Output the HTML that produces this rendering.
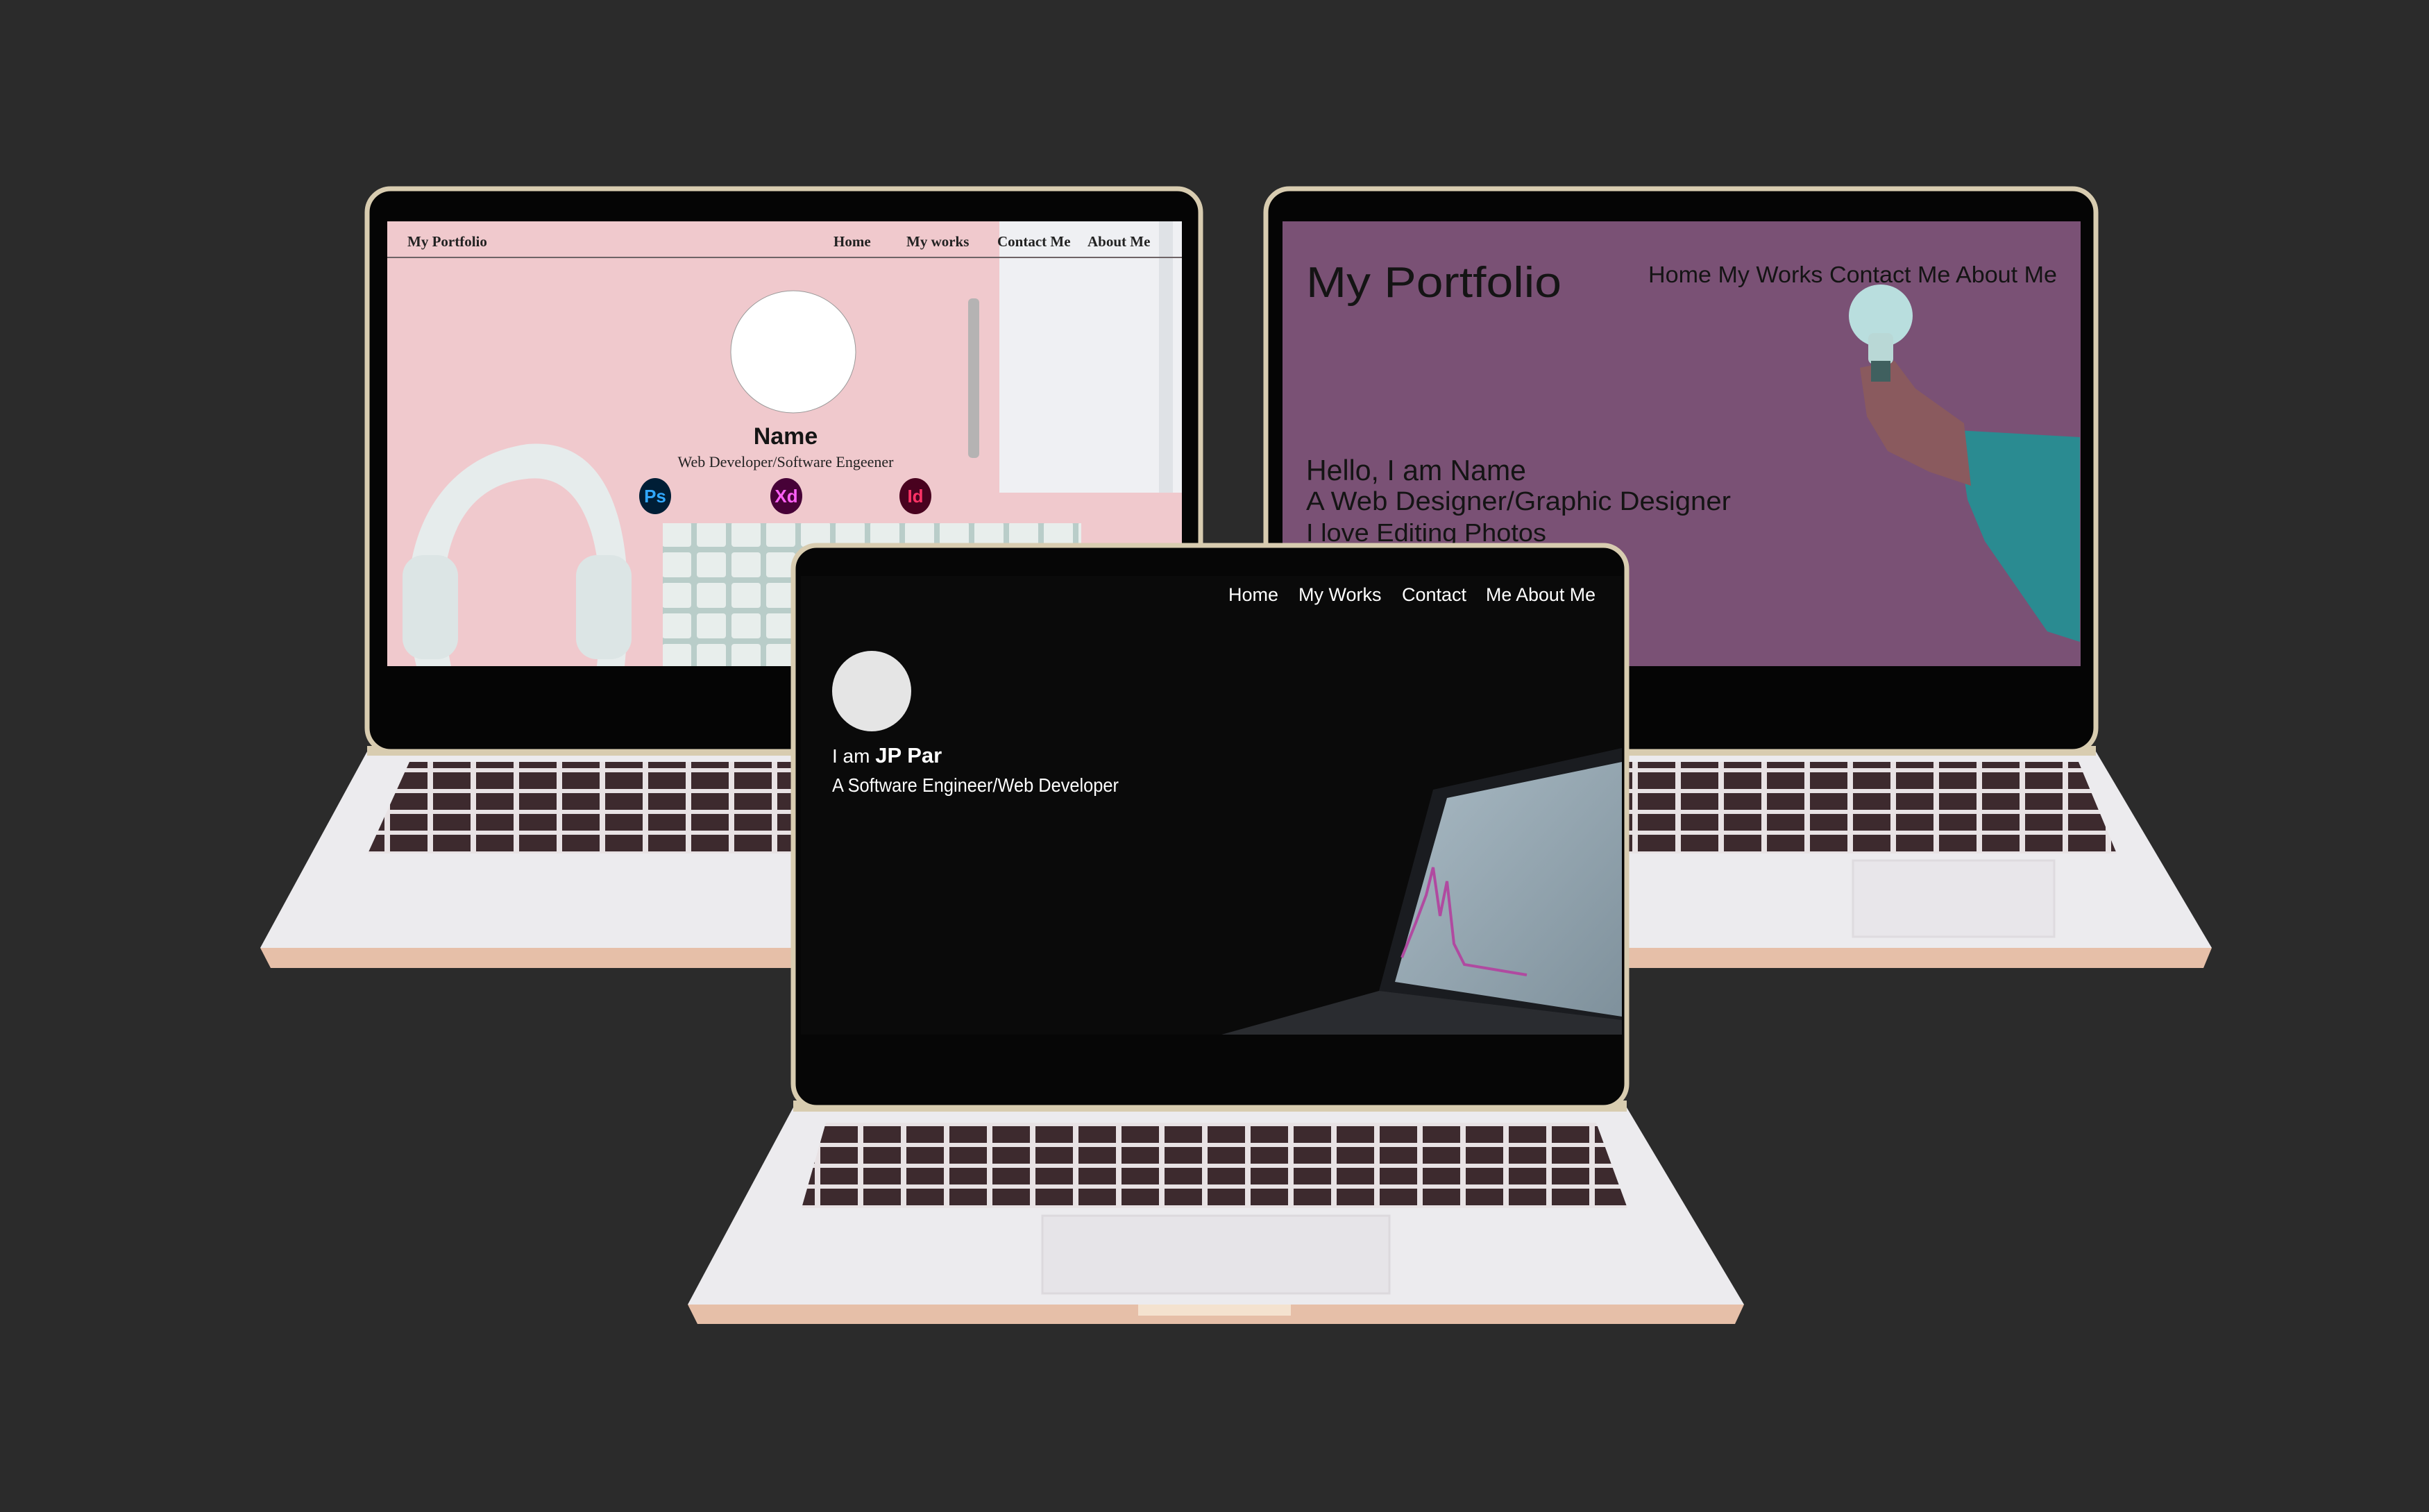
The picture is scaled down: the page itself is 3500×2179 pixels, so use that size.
<!DOCTYPE html>
<html><head><meta charset="utf-8"><style>
html,body{margin:0;padding:0;background:#2b2b2b;}
svg{display:block}
</style></head><body>
<svg width="3500" height="2179" viewBox="0 0 3500 2179" xmlns="http://www.w3.org/2000/svg">
<defs>
<pattern id="keys" width="62" height="30" patternUnits="userSpaceOnUse">
<rect width="62" height="30" fill="#e8e2e4"/>
<rect x="4" y="3" width="54" height="24" fill="#3d2a2e"/>
</pattern>
<pattern id="lkeys" width="50" height="44" patternUnits="userSpaceOnUse">
<rect width="50" height="44" fill="#b9cdc9"/>
<rect x="4" y="4" width="42" height="36" rx="4" fill="#e8eeec"/>
</pattern>
<linearGradient id="scr" x1="0" y1="0" x2="1" y2="1"><stop offset="0" stop-color="#a9bac4"/><stop offset="1" stop-color="#7f919c"/></linearGradient>
</defs>
<rect width="3500" height="2179" fill="#2b2b2b"/>

<!-- LEFT LAPTOP base -->
<polygon points="529,1083 1730,1083 1800,1366 375,1366" fill="#ecebee"/>
<polygon points="375,1366 1800,1366 1795,1395 390,1395" fill="#e6bfa8"/>
<polygon points="590,1098 1715,1098 1770,1230 530,1230" fill="url(#keys)"/>
<rect x="529" y="1075" width="1201" height="14" fill="#d8ccb0"/>
<!-- RIGHT LAPTOP base -->
<polygon points="1824,1083 3020,1083 3187,1366 1670,1366" fill="#ecebee"/>
<polygon points="1670,1366 3187,1366 3175,1395 1690,1395" fill="#e6bfa8"/>
<polygon points="1840,1098 2995,1098 3050,1230 1785,1230" fill="url(#keys)"/>
<rect x="2670" y="1240" width="290" height="110" fill="#e8e6ea" stroke="#dedbdf" stroke-width="3"/>
<rect x="1824" y="1075" width="1196" height="14" fill="#d8ccb0"/>

<!-- LEFT LID -->
<rect x="529" y="272" width="1201" height="811" rx="34" fill="#050505" stroke="#d8ccb0" stroke-width="7"/>
<rect x="558" y="319" width="1145" height="641" fill="#f0c9cd"/>
<rect x="1440" y="319" width="263" height="391" fill="#eff0f3"/>
<rect x="1670" y="319" width="20" height="391" fill="#dfe2e6"/>
<rect x="1395" y="430" width="16" height="230" rx="6" fill="#b5b3b3"/>
<rect x="955" y="754" width="603" height="206" fill="url(#lkeys)"/>
<path d="M600,960 C560,800 620,660 760,640 C880,630 920,760 900,960 L860,960 C880,780 840,680 760,690 C650,700 620,820 650,960 Z" fill="#e6ecec"/>
<rect x="580" y="800" width="80" height="150" rx="30" fill="#dce5e5"/>
<rect x="830" y="800" width="80" height="150" rx="30" fill="#dce5e5"/>
<line x1="558" y1="371" x2="1703" y2="371" stroke="#6e6466" stroke-width="2"/>
<g font-family="Liberation Serif, serif" font-weight="bold" font-size="21" fill="#222">
<text x="587" y="355">My Portfolio</text>
<text x="1201" y="355">Home</text>
<text x="1306" y="355">My works</text>
<text x="1437" y="355">Contact Me</text>
<text x="1567" y="355">About Me</text>
</g>
<ellipse cx="1143" cy="507" rx="90" ry="88" fill="#fff" stroke="#999" stroke-width="1"/>
<text x="1132" y="640" text-anchor="middle" font-family="Liberation Sans, sans-serif" font-weight="bold" font-size="34" fill="#151515">Name</text>
<text x="1132" y="673" text-anchor="middle" font-family="Liberation Serif, serif" font-size="22" fill="#222">Web Developer/Software Engeener</text>
<g font-family="Liberation Sans, sans-serif" font-weight="bold" font-size="26" text-anchor="middle">
<ellipse cx="944" cy="715" rx="23" ry="26" fill="#001e36"/><text x="944" y="724" fill="#31a8ff">Ps</text>
<ellipse cx="1133" cy="715" rx="23" ry="26" fill="#470137"/><text x="1133" y="724" fill="#ff61f6">Xd</text>
<ellipse cx="1319" cy="715" rx="23" ry="26" fill="#49021f"/><text x="1319" y="724" fill="#ff3366">Id</text>
</g>

<!-- RIGHT LID -->
<rect x="1824" y="272" width="1196" height="811" rx="34" fill="#050505" stroke="#d8ccb0" stroke-width="7"/>
<rect x="1848" y="319" width="1150" height="641" fill="#7a5175"/>
<g font-family="Liberation Sans, sans-serif" fill="#141414">
<text x="1882" y="428" font-size="62" textLength="368" lengthAdjust="spacingAndGlyphs">My Portfolio</text>
<text x="2375" y="407" font-size="33" textLength="589" lengthAdjust="spacingAndGlyphs">Home My Works Contact Me About Me</text>
<text x="1882" y="692" font-size="42" textLength="317" lengthAdjust="spacingAndGlyphs">Hello, I am Name</text>
<text x="1882" y="735" font-size="38" textLength="612" lengthAdjust="spacingAndGlyphs">A Web Designer/Graphic Designer</text>
<text x="1882" y="780" font-size="36" textLength="346" lengthAdjust="spacingAndGlyphs">I love Editing Photos</text>
</g>
<path d="M2820,620 L2997,630 L2997,925 L2950,910 L2860,780 L2835,720 Z" fill="#2a8b91"/>
<path d="M2680,530 L2730,520 L2760,560 L2830,610 L2840,700 L2780,680 L2720,650 L2690,600 Z" fill="#8a5a5e"/>
<ellipse cx="2710" cy="455" rx="46" ry="45" fill="#b9dede"/>
<rect x="2692" y="480" width="36" height="45" rx="8" fill="#b9d8d6"/>
<rect x="2696" y="520" width="28" height="30" fill="#40605f"/>

<!-- CENTER LAPTOP base -->
<polygon points="1143,1596 2344,1596 2513,1880 991,1880" fill="#ecebee"/>
<polygon points="991,1880 2513,1880 2500,1908 1005,1908" fill="#e6bfa8"/>
<rect x="1640" y="1880" width="220" height="16" fill="#f4e2cf"/>
<polygon points="1190,1618 2300,1618 2345,1741 1155,1741" fill="url(#keys)"/>
<rect x="1502" y="1752" width="500" height="112" fill="#e6e4e8" stroke="#dcd9dd" stroke-width="3"/>
<rect x="1143" y="1586" width="1201" height="16" fill="#d8ccb0"/>
<!-- CENTER LID -->
<rect x="1143" y="786" width="1201" height="810" rx="34" fill="#060606" stroke="#d8ccb0" stroke-width="7"/>
<rect x="1154" y="830" width="1183" height="661" fill="#0a0a0a"/>
<polygon points="2065,1138 2337,1078 2337,1491 1987,1428" fill="#1a1c20"/>
<polygon points="2085,1150 2337,1098 2337,1465 2010,1415" fill="url(#scr)"/>
<path d="M2020,1380 L2040,1330 L2055,1290 L2065,1250 L2075,1320 L2085,1270 L2095,1360 L2110,1390 L2200,1405" stroke="#b04aa0" stroke-width="4" fill="none"/>
<polygon points="1760,1491 1987,1428 2337,1470 2337,1491" fill="#2a2c30"/>
<g font-family="Liberation Sans, sans-serif" fill="#fff">
<text x="1770" y="866" font-size="27">Home</text>
<text x="1871" y="866" font-size="27">My Works</text>
<text x="2020" y="866" font-size="27">Contact</text>
<text x="2141" y="866" font-size="27" textLength="158" lengthAdjust="spacingAndGlyphs">Me About Me</text>
<text x="1199" y="1099" font-size="28">I am <tspan font-weight="bold" font-size="31">JP Par</tspan></text>
<text x="1199" y="1141" font-size="28" textLength="413" lengthAdjust="spacingAndGlyphs">A Software Engineer/Web Developer</text>
</g>
<ellipse cx="1256" cy="996" rx="57" ry="58" fill="#e5e5e5"/>
</svg>
</body></html>
